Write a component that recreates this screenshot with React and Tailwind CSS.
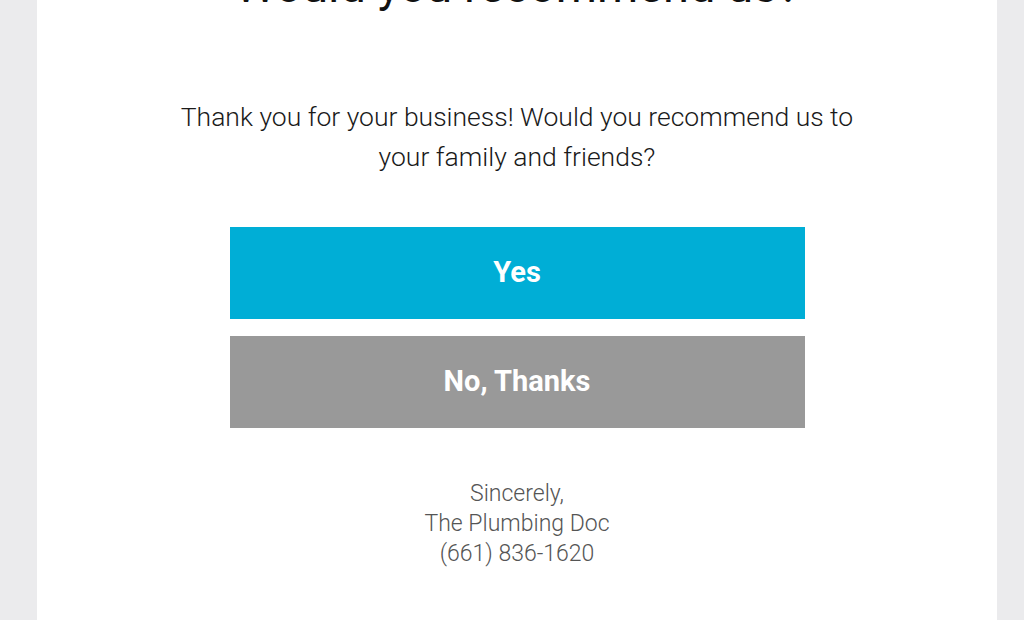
import React from 'react';

export default function App() {
  return (
    <div className="h-[620px] overflow-hidden bg-[#ebebed]" style={{ fontFamily: 'Roboto, "Liberation Sans", sans-serif' }}>
      <div className="ml-[37px] w-[960px] h-full bg-white flex flex-col items-center">
        <h1 className="-mt-[38px] text-[47px] leading-none font-normal text-[#111]">Would you recommend us?</h1>

        <p className="mt-[88px] w-[720px] text-center text-[26.5px] leading-[40px] font-light text-[#1a1a1a]">
          Thank you for your business! Would you recommend us to your family and friends?
        </p>

        <div className="mt-[50px] w-[575px] flex flex-col gap-[17px]">
          <button className="h-[92px] bg-[#00aed6] text-white text-[29px] font-bold">Yes</button>
          <button className="h-[92px] bg-[#999999] text-white text-[29px] font-bold">No, Thanks</button>
        </div>

        <div className="mt-[51px] text-center text-[23px] leading-[30px] font-light text-[#555]">
          <p>Sincerely,</p>
          <p>The Plumbing Doc</p>
          <p>(661) 836-1620</p>
        </div>
      </div>
    </div>
  );
}
